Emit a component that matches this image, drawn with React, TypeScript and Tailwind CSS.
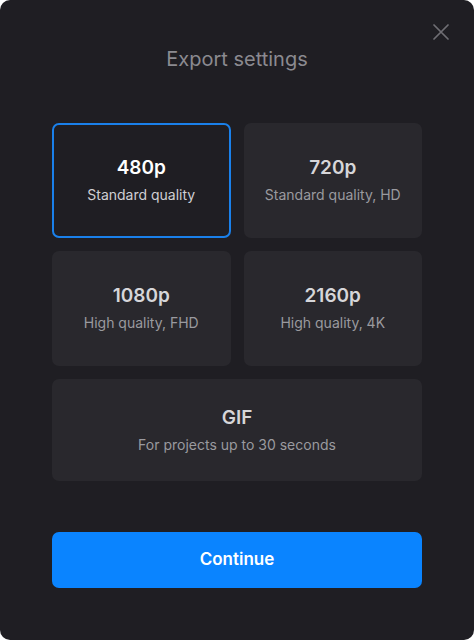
import { useState } from "react";

const options = [
  { id: "480", title: "480p", sub: "Standard quality" },
  { id: "720", title: "720p", sub: "Standard quality, HD" },
  { id: "1080", title: "1080p", sub: "High quality, FHD" },
  { id: "2160", title: "2160p", sub: "High quality, 4K" },
];

function OptionCard({
  title,
  sub,
  selected,
  onClick,
  className = "",
}: {
  title: string;
  sub: string;
  selected: boolean;
  onClick: () => void;
  className?: string;
}) {
  return (
    <button
      onClick={onClick}
      className={`flex flex-col items-center justify-center gap-[5px] rounded-[7px] ${
        selected
          ? "border-2 border-[#1a80ea] bg-[#1f1e23]"
          : "border-2 border-transparent bg-[#29282d]"
      } ${className}`}
    >
      <span
        className={`text-[19px] font-semibold leading-6 ${
          selected ? "text-white" : "text-[#d6d6d9]"
        }`}
      >
        {title}
      </span>
      <span
        className={`text-[14px] leading-5 ${
          selected ? "text-[#cfcfd3]" : "text-[#9a9a9f]"
        }`}
      >
        {sub}
      </span>
    </button>
  );
}

export default function App() {
  const [selected, setSelected] = useState("480");

  return (
    <div className="min-h-screen bg-white">
      <div
        className="relative flex h-[640px] w-[474px] flex-col rounded-[10px] bg-[#1f1e23] px-[52px]"
        style={{ fontFamily: "Inter, 'Noto Sans', sans-serif" }}
      >
        {/* close */}
        <button className="absolute right-[25px] top-[24px] text-[#6f6e74]">
          <svg width="16" height="16" viewBox="0 0 16 16" fill="none">
            <path
              d="M1 1L15 15M15 1L1 15"
              stroke="currentColor"
              strokeWidth="1.7"
              strokeLinecap="round"
            />
          </svg>
        </button>

        <h1 className="pt-[46px] text-center text-[20px] font-normal leading-[26px] text-[#8b8a90]">
          Export settings
        </h1>

        <div className="mt-[51px] grid grid-cols-2 gap-[13px]">
          {options.map((o) => (
            <OptionCard
              key={o.id}
              title={o.title}
              sub={o.sub}
              selected={selected === o.id}
              onClick={() => setSelected(o.id)}
              className="h-[115px]"
            />
          ))}
          <OptionCard
            title="GIF"
            sub="For projects up to 30 seconds"
            selected={selected === "gif"}
            onClick={() => setSelected("gif")}
            className="col-span-2 h-[102px]"
          />
        </div>

        <button className="mt-[51px] h-[56px] w-full rounded-[7px] bg-[#0a84ff] text-[17px] font-semibold text-white">
          Continue
        </button>
      </div>
    </div>
  );
}
